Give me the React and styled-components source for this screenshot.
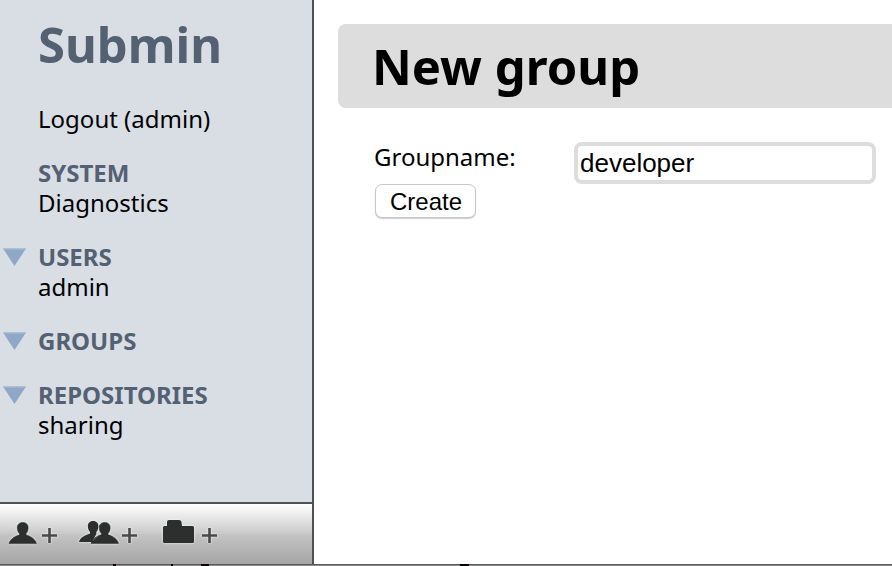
import React, { useState } from "react";
import styled, { createGlobalStyle } from "styled-components";

const GlobalStyle = createGlobalStyle`
  *, *::before, *::after { box-sizing: border-box; }
  body {
    margin: 0;
    background: #fff;
    color: #000;
    font: 24px/30px "Noto Sans", "Open Sans", sans-serif;
  }
`;

const Page = styled.div`
  display: flex;
  flex-direction: column;
  min-height: 100vh;
`;

const Columns = styled.div`
  display: flex;
  flex: 1;
`;

const Sidebar = styled.aside`
  display: flex;
  flex-direction: column;
  flex: 0 0 314px;
  background: #d9dee5;
  border-right: 2px solid #505154;
`;

const Brand = styled.h1`
  margin: 0;
  padding: 14px 0 0 38px;
  color: #536172;
  font-size: 49px;
  line-height: 60px;
  font-weight: 700;
`;

const Nav = styled.nav`
  display: flex;
  flex: 1;
  flex-direction: column;
  gap: 24px;
  padding: 30px 0;
`;

const Section = styled.section`
  display: grid;
  grid-template-columns: 38px 1fr;
`;

const Heading = styled.h2`
  grid-column: 2;
  grid-row: 1;
  margin: 0;
  color: #536172;
  font-size: 24px;
  line-height: 30px;
  font-weight: 700;
`;

const Toggle = styled.button`
  grid-column: 1;
  grid-row: 1;
  display: flex;
  align-items: center;
  padding: 0 0 0 3px;
  border: 0;
  background: none;
  cursor: pointer;
`;

const Item = styled.a`
  grid-column: 2;
  justify-self: start;
  color: #000;
  text-decoration: none;
`;

const Toolbar = styled.div`
  display: flex;
  align-items: flex-start;
  gap: 21px;
  height: 62px;
  padding: 14px 8px 0;
  border-top: 2px solid #505154;
  background: linear-gradient(#fff 0%, #c9c9c9 50%, #c4c4c4 50%, #a6a6a6 100%);
`;

const ToolButton = styled.button`
  display: block;
  padding: 0;
  border: 0;
  background: none;
  cursor: pointer;

  svg {
    display: block;
    overflow: visible;
    filter: drop-shadow(0 0 1px rgba(255, 255, 255, 0.9));
  }
`;

const Main = styled.main`
  flex: 1;
  min-width: 0;
  padding: 24px 0 24px 24px;
`;

const Title = styled.h1`
  margin: 0;
  padding: 12px 34px;
  border-radius: 8px 0 0 8px;
  background: #ddd;
  font-size: 49px;
  line-height: 60px;
  font-weight: 700;
`;

const Form = styled.form`
  display: grid;
  grid-template-columns: 200px 1fr;
  padding: 34px 16px 0 36px;
`;

const Label = styled.label`
  line-height: 30px;
`;

const TextInput = styled.input`
  width: 100%;
  height: 42px;
  padding: 0 2px;
  border: 4px solid #ddd;
  border-radius: 8px;
  background: #fff;
  color: #000;
  font: 26px "Liberation Sans", Arial, sans-serif;
  outline: none;
`;

const Submit = styled.button`
  justify-self: start;
  height: 34px;
  margin-left: 1px;
  padding: 1px 13px 0 14px;
  border: 1px solid #c8c8c8;
  border-radius: 7px;
  background: #fff;
  box-shadow: 0 1px 1px rgba(0, 0, 0, 0.2);
  color: #000;
  font: 24px "Liberation Sans", Arial, sans-serif;
`;

const BottomEdge = styled.footer`
  height: 2px;
  overflow: hidden;
  background: linear-gradient(#59595b 50%, #8c8c8c 50%);

  svg { display: block; }
`;

const Triangle = () => (
  <svg width="23" height="18" viewBox="0 0 23 18" aria-hidden="true">
    <path d="M0 0.5H23L11.5 18Z" fill="#8fa8c8" />
    <path d="M0 1H23" stroke="#a9bcd3" strokeWidth="1" />
  </svg>
);

const Plus = ({ x }) => (
  <path d={`M${x} 17.5H${x + 15}M${x + 7.5} 10V25`} stroke="#484848" strokeWidth="2.6" />
);

const PERSON =
  "M14 0C17.8 0 19.9 2.6 19.5 6.2C19.300 8.500 18.600 10.200 17.400 11.400V13C22.500 14.500 27 17.600 28 22H0C1 17.600 5.500 14.500 10.600 13V11.400C9.400 10.200 8.700 8.500 8.500 6.200C8.100 2.600 10.200 0 14 0Z";

const UserAdd = () => (
  <svg width="50" height="30" viewBox="0 0 50 30" aria-hidden="true">
    <path d={PERSON} transform="translate(1 4.5) scale(.98 .96)" fill="#2d2f2f" stroke="#2d2f2f" strokeWidth=".6" />
    <Plus x={34} />
  </svg>
);

const GroupAdd = () => (
  <svg width="63" height="30" viewBox="0 0 63 30" aria-hidden="true">
    <path d="M14 3C17.8 3 19.8 5.5 19.4 9C19.2 11.3 18.4 12.8 17.3 14V16L13 24H0C1 19.5 6 17.2 11 15.5V14C9.9 12.8 9.1 11.3 8.9 9C8.5 5.5 10.5 3 14 3Z" fill="#2d2f2f" />
    <path d={PERSON} transform="translate(12 4.5) scale(.98 .95)" fill="#2d2f2f" stroke="#2d2f2f" strokeWidth=".6" />
    <path d="M14 22.5L20 17.5" stroke="#666" strokeWidth=".7" />
    <Plus x={43} />
  </svg>
);

const RepositoryAdd = () => (
  <svg width="56" height="30" viewBox="0 0 56 30" aria-hidden="true">
    <path d="M0 9.5Q0 8 1.5 8H4V4Q4 2 6 2H16Q18 2 18.5 4L19 8H29.5Q31 8 31 9.5V23.5Q31 25 29.5 25H1.5Q0 25 0 23.5Z" fill="#2d2f2f" />
    <Plus x={39} />
  </svg>
);

const groups = [
  { name: "USERS", items: ["admin"] },
  { name: "GROUPS", items: [] },
  { name: "REPOSITORIES", items: ["sharing"] },
];

function CollapsibleSection({ name, items }) {
  const [open, setOpen] = useState(true);
  return (
    <Section>
      <Toggle type="button" aria-label={name} aria-expanded={open} onClick={() => setOpen(!open)}>
        <Triangle />
      </Toggle>
      <Heading>{name}</Heading>
      {open && items.map((item) => <Item key={item} href="#">{item}</Item>)}
    </Section>
  );
}

export default function App() {
  const [name, setName] = useState("developer");
  return (
    <Page>
      <GlobalStyle />
      <Columns>
        <Sidebar>
          <Brand>Submin</Brand>
          <Nav>
            <Section>
              <Item href="#">Logout (admin)</Item>
            </Section>
            <Section>
              <Heading>SYSTEM</Heading>
              <Item href="#">Diagnostics</Item>
            </Section>
            {groups.map((group) => (
              <CollapsibleSection key={group.name} {...group} />
            ))}
          </Nav>
          <Toolbar>
            <ToolButton type="button" aria-label="Add user"><UserAdd /></ToolButton>
            <ToolButton type="button" aria-label="Add group"><GroupAdd /></ToolButton>
            <ToolButton type="button" aria-label="Add repository"><RepositoryAdd /></ToolButton>
          </Toolbar>
        </Sidebar>
        <Main>
          <Title>New group</Title>
          <Form onSubmit={(event) => event.preventDefault()}>
            <Label htmlFor="groupname">Groupname:</Label>
            <TextInput id="groupname" value={name} onChange={(e) => setName(e.target.value)} />
            <Submit type="submit">Create</Submit>
          </Form>
        </Main>
      </Columns>
      <BottomEdge>
        <svg width="480" height="2" aria-hidden="true">
          <path d="M113 1H116M171 1H173M201 1H209M460 1H469" stroke="#0b0006" strokeWidth="2" />
        </svg>
      </BottomEdge>
    </Page>
  );
}
